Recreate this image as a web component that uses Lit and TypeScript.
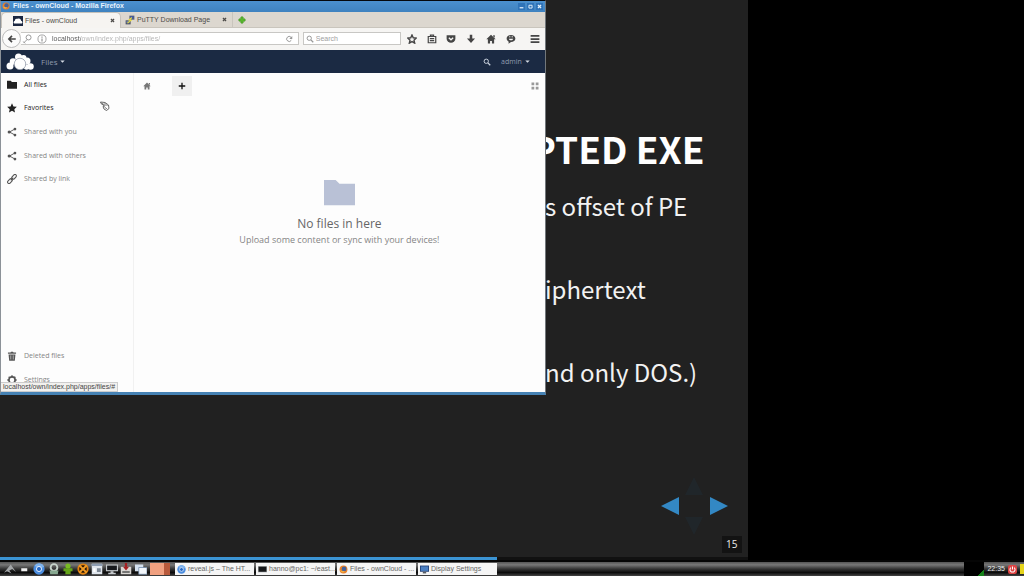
import { LitElement, html, svg, css, TemplateResult } from "lit";
import { customElement } from "lit/decorators.js";
import { classMap } from "lit/directives/class-map.js";
import { styleMap } from "lit/directives/style-map.js";

const shapes: Record<string, TemplateResult> = {
  back: svg`<path d="M14 8H3M8 3L3 8l5 5" fill="none" stroke="currentColor" stroke-width="2.6"/>`,
  key: svg`<g fill="none" stroke="currentColor" stroke-width="1.6"><circle cx="10.5" cy="5.5" r="4"/><path d="M8 9l-5.5 5.5M2 12l3 3"/></g>`,
  info: svg`<circle cx="8" cy="8" r="6.5" fill="none" stroke="currentColor" stroke-width="1.4"/><path d="M7 3.8h2v2H7zM7 7h2v5H7z" fill="currentColor"/>`,
  reload: svg`<path d="M12.6 10.5A5 5 0 1 1 12 4.5" fill="none" stroke="currentColor" stroke-width="2"/><path d="M14.5 2v6h-6z" fill="currentColor"/>`,
  search: svg`<circle cx="6.5" cy="6.5" r="4.3" fill="none" stroke="currentColor" stroke-width="2"/><path d="M9.8 9.8l4.7 4.7" stroke="currentColor" stroke-width="2.6"/>`,
  star: svg`<path d="M8 1.5l2 4.500 4.900.5-3.700 3.300 1.100 4.800L8 12.100l-4.300 2.500 1.100-4.800L1.100 6.500 6 6z" fill="none" stroke="currentColor" stroke-width="2.2"/>`,
  starFull: svg`<path d="M8 .5l2.300 5 5.400.6-4 3.700 1.100 5.400L8 12.500l-4.800 2.700 1.100-5.400-4-3.700 5.400-.6z" fill="currentColor"/>`,
  clipboard: svg`<path d="M2 4h12v10H2zM5.500 4V1.800h5V4M4.500 7.500h7M4.500 10.500h7" fill="none" stroke="currentColor" stroke-width="1.9"/>`,
  pocket: svg`<path d="M1 2h14v5a7 7 0 0 1-14 0z" fill="currentColor"/><path d="M4.500 6L8 9.300 11.500 6" fill="none" stroke="#f5f4f2" stroke-width="2"/>`,
  download: svg`<path d="M6 1h4v6h4.500L8 14.500 1.500 7H6z" fill="currentColor"/>`,
  home: svg`<path d="M8 1l7.500 7.500H13V15H9.500v-4h-3v4H3V8.500H.5z" fill="currentColor"/><path d="M11.500 2H14v4l-2.500-2z" fill="currentColor"/>`,
  chat: svg`<path d="M8 1.500c4 0 7 2.400 7 5.700s-3 5.700-7 5.700L4 15.500l.3-3.300C2.300 11.200 1 9.400 1 7.200c0-3.300 3-5.700 7-5.700z" fill="currentColor"/><path d="M4.500 7.500c1 3.500 6 3.500 7 0z" fill="#f5f4f2"/><path d="M5 4.500h2M9 4.500h2" stroke="#f5f4f2" stroke-width="1.5"/>`,
  menu: svg`<path d="M1 3h14M1 8h14M1 13h14" stroke="currentColor" stroke-width="2.8"/>`,
  folder: svg`<path d="M0 1h6l2 2h8v11H0z" fill="currentColor"/>`,
  share: svg`<path d="M13 3L4 8l9 5" fill="none" stroke="currentColor" stroke-width="1.5"/><circle cx="12.7" cy="3.2" r="2.200" fill="currentColor"/><circle cx="3.5" cy="8" r="2.5" fill="currentColor"/><circle cx="12.7" cy="12.8" r="2.2" fill="currentColor"/>`,
  link: svg`<g fill="none" stroke="currentColor" stroke-width="1.7"><rect x="6.8" y="2.300" width="9" height="4.6" rx="2.3" transform="rotate(-48 11.3 4.6)"/><rect x=".2" y="9.1" width="9" height="4.6" rx="2.3" transform="rotate(-48 4.7 11.4)"/><path d="M6 10l4-4"/></g>`,
  trash: svg`<path d="M1.500 2.500h4L6.500 1h3l1 1.500h4v2h-13zM2.500 5.500h11L12.500 15.500h-9z" fill="currentColor"/><path d="M6 7v6.500M10 7v6.500" stroke="#fff" stroke-width=".8"/>`,
  gear: svg`<circle cx="8" cy="8" r="5" fill="none" stroke="currentColor" stroke-width="2.6"/><path d="M8 .5v3M8 12.500v3M.5 8h3M12.500 8h3M2.700 2.700l2 2M11.300 11.300l2 2M2.700 13.300l2-2M11.300 4.700l2-2" stroke="currentColor" stroke-width="2.2"/>`,
  plus: svg`<path d="M8 1.500v13M1.500 8h13" stroke="currentColor" stroke-width="2.6"/>`,
  grid: svg`<path d="M1 1h5.500v5.500H1zM9.500 1H15v5.500H9.500zM1 9.500h5.500V15H1zM9.500 9.500H15V15H9.500z" fill="currentColor"/>`,
  close: svg`<path d="M3 3l10 10M13 3L3 13" stroke="currentColor" stroke-width="4"/>`,
  caret: svg`<path d="M1 4.500h14l-7 7.500z" fill="currentColor"/>`,
  newTab: svg`<path d="M8 1l2.500 1.500v3h3L15 8l-1.500 2.500h-3v3L8 15l-2.500-1.500v-3h-3L1 8l1.500-2.500h3v-3z" fill="#58b62c" stroke="#3f8f22"/>`,
  cloudTab: svg`<rect width="16" height="16" fill="#1b2740"/><path d="M2 12a2.500 2.500 0 0 1 1-4.500 3 3 0 0 1 4-3 4 4 0 0 1 6 3A2.500 2.500 0 0 1 14 12z" fill="#fff"/>`,
  putty: svg`<path d="M7 1h8v6.500H7z" fill="#5a6072"/><path d="M8.500 2.200h5v3.600h-5z" fill="#3a58b5"/><path d="M1 8.500h8V15H1z" fill="#4c5060"/><path d="M2.300 9.700h5v3.500h-5z" fill="#6b7ea8"/><path d="M11 4L6.500 8l3 .5L4 13" fill="none" stroke="#e8dc3c" stroke-width="1.8"/>`,
  firefox: svg`<circle cx="8" cy="8" r="7" fill="#e8812b"/><circle cx="9" cy="7" r="4.3" fill="#42629c"/><path d="M1 6c1 5 5 6 9 4-1 4-7 5-9-4z" fill="#f5c14b"/>`,
  chromium: svg`<circle cx="8" cy="8" r="7.500" fill="#4c8ee0"/><path d="M8 8L2 3.500A7.500 7.500 0 0 1 15 5z" fill="#7fb3ee"/><circle cx="8" cy="8" r="3.4" fill="#2466c4" stroke="#e8f1fb" stroke-width="1.3"/>`,
  bird: svg`<path d="M0 13L9 2l2 3 5 7-5-4-4 2 3 4-6-3z" fill="#a3a6a8"/>`,
  dash: svg`<path d="M3 7h8v4H3z" fill="#f0f0f0"/>`,
  recycle: svg`<circle cx="8" cy="6" r="4.5" fill="none" stroke="#c8d4cc" stroke-width="2.5"/><path d="M2 10h12l-1 5H3z" fill="#87a890"/>`,
  buddy: svg`<circle cx="8" cy="4" r="3.5" fill="#78ba23"/><path d="M2 7h12v4h-2.500v4h-7v-4H2z" fill="#65a51a"/>`,
  cross: svg`<circle cx="8" cy="8" r="7.5" fill="#e3820f"/><circle cx="8" cy="8" r="5" fill="#211308"/><path d="M3 3l10 10M13 3L3 13" stroke="#ef9b25" stroke-width="2.5"/>`,
  panel: svg`<path d="M1 1h14v14H1z" fill="#dfe5ec"/><path d="M1 1h14v3H1z" fill="#8d9db2"/><path d="M8 7h5v5H8z" fill="#7c8794"/><path d="M3 7h3v5H3z" fill="#fff"/>`,
  monitor: svg`<path d="M0 2h16v9H0z" fill="#c4c8cb"/><path d="M1.500 3.500h13v6h-13z" fill="#17191c"/><path d="M6 11h4v2h3v2H3v-2h3z" fill="#c4c8cb"/>`,
  tray: svg`<path d="M1 5h14v10H1z" fill="#d8d5d2"/><path d="M6.500 0h3v5h2.500L8 10 4 5h2.500z" fill="#a52022"/><path d="M3 11h10v2H3z" fill="#555"/>`,
  windows: svg`<path d="M0 2h11v9H0z" fill="#d5e1ef"/><path d="M5 6h11v9H5z" fill="#f3f7fb" stroke="#6b86a5"/>`,
  terminal: svg`<path d="M0 2h16v11H0z" fill="#a6a9aa"/><path d="M1 3h14v9H1z" fill="#151719"/>`,
  display: svg`<path d="M0 1h16v11H0z" fill="#213f75"/><path d="M1.500 2.500h13v8h-13z" fill="#4a7fc2"/><path d="M5 12h6v3H5z" fill="#595e65"/>`,
  power: svg`<rect width="16" height="16" rx="4" fill="#df4444"/><path d="M5 4.800a4.500 4.500 0 1 0 6 0M8 2.500V8" fill="none" stroke="#fff" stroke-width="1.8"/>`,
  minimize: svg`<path d="M2 10h12v4H2z" fill="currentColor"/>`,
  maximize: svg`<path d="M3 4h10v9H3z" fill="none" stroke="currentColor" stroke-width="3"/>`,
};

const icon = (name: string, size = "m") =>
  html`<svg class="icon ${size}" viewBox="0 0 16 16" aria-hidden="true">${shapes[name]}</svg>`;

@customElement("firefox-window")
class FirefoxWindow extends LitElement {
  static styles = css`
    :host { display: flex; flex-direction: column; box-sizing: border-box; overflow: hidden;
      background: #fdfdfd; border-top: 1px solid #05080c; border-bottom: 3px solid #4682b4;
      border-left: 1px solid #8c9298; border-right: 1px solid #72777b;
      font-family: "Liberation Sans", sans-serif; font-size: 7px; line-height: 10px; color: #555; }
    * { box-sizing: border-box; }
    button, input { font: inherit; color: inherit; border: 0; padding: 0; margin: 0; background: none; outline: 0; }
    button { display: flex; align-items: center; justify-content: center; }
    a { color: inherit; text-decoration: none; }
    .icon { display: block; flex: none; width: 10px; height: 10px; }
    .icon.xs { width: 5px; height: 5px; }
    .icon.s { width: 8px; height: 8px; }
    .icon.xl { width: 31px; height: 31px; }
    .title { display: flex; align-items: center; gap: 3px; height: 11px; padding: 0 2px 1px 1px; flex: none;
      background: linear-gradient(#4b90cf, #3f82bf); color: #e8f3fd; font-weight: 700; }
    .title h1 { font: inherit; margin: 0; flex: 1; }
    .controls { display: flex; gap: 2px; }
    .controls button { width: 7px; height: 7px; background: #2f73b8; color: #e4f1fc; }
    .tabs { display: flex; align-items: stretch; height: 16px; flex: none; background: #dcd7cf;
      border-bottom: 1px solid #c9c5bd; }
    .tab { display: flex; align-items: center; gap: 2px; width: 111px; padding: 0 5px 0 4px; color: #4d4b48; }
    .tab.active { width: 120px; margin-bottom: -1px; padding: 0 5px 0 11px; background: #f6f4f1;
      border-radius: 5px 5px 0 0; border: 1px solid #c5c1ba; border-bottom: 0; }
    .tab span { flex: 1; white-space: nowrap; }
    .add { width: 18px; border-left: 1px solid #c9c5bd; }
    .bar { display: flex; align-items: center; height: 22px; flex: none; padding: 0 5px 1px 1px; background: #f6f5f3; color: #454545; }
    .back { width: 19px; height: 19px; border: 1px solid #bbb; border-radius: 50%; background: #fbfbfb; flex: none; }
    .field { display: flex; align-items: center; gap: 5px; height: 13px; background: #fff;
      border: 1px solid #c8c7c4; padding: 0 5px; color: #999; }
    .address { flex: 1; border-left: 0; padding-left: 1px; }
    .find { width: 98px; margin-left: 4px; padding-left: 2px; gap: 2px; }
    .field input { flex: 1; min-width: 0; width: 0; height: 10px; }
    .address input { color: transparent; background: linear-gradient(90deg, #555 29px, #b2b2b2 29px); background-clip: text; -webkit-background-clip: text; }
    .find input::placeholder { color: #a0a0a0; opacity: 1; }
    .tools { display: flex; justify-content: space-between; width: 133px; margin-left: 6px; }
    .tools button:last-child { margin-left: 4px; }
    .cloud { display: flex; align-items: center; height: 23px; flex: none; padding: 0 15px 0 5px;
      background: #1b2a43; color: #8f9bad; font-family: "Open Sans", sans-serif; }
    .logo { width: 28px; height: 17px; margin-right: 7px; }
    .pick { gap: 3px; }
    .pick .icon { color: #d5dbe4; }
    .pick.app { font-size: 8px; margin-right: auto; }
    .glass { color: #c8d0dc; margin-right: 10px; }
    .body { display: flex; flex: 1; min-height: 0; font-family: "Open Sans", sans-serif; background: #fdfdfd; }
    nav { display: flex; flex-direction: column; width: 133px; border-right: 1px solid #f1f1f1; flex: none; }
    nav a { display: flex; align-items: center; gap: 7px; flex: 1; padding-left: 6px; color: #858585; }
    nav a .icon { color: #555; }
    nav a.strong, nav a.strong .icon { color: #222; }
    .views, .low { display: flex; flex-direction: column; height: 118px; }
    .low { height: 48px; margin-top: auto; }
    main { flex: 1; display: flex; flex-direction: column; }
    .crumbs { display: flex; align-items: center; height: 26px; padding: 0 6px 0 9px; color: #777; }
    .plus { width: 20px; height: 20px; margin-left: 21px; margin-right: auto; background: #f0f0f0; color: #111; }
    .crumbs button:last-child { color: #999; }
    .empty { display: flex; flex-direction: column; align-items: center; margin-top: 79px; color: #858585; font-size: 9px; }
    .empty .icon { color: #b9c1d6; }
    .empty h2 { margin: 7px 0 2px; font-size: 12px; line-height: 16px; font-weight: 400; color: #666; }
    .empty p { margin: 0; line-height: 12px; }
    .status { position: absolute; left: 0; bottom: 0; padding: 0 2px; line-height: 8px; height: 10px; background: #f2f1ef; border: 1px solid #ccc; border-left: 0; color: #444; }
    .pointer { position: absolute; left: 99px; top: 100px; width: 10px; height: 10px; }
  `;

  private nav(name: string, text: string, strong = false) {
    return html`<a href="#" class=${classMap({ strong })}>${icon(name)}<span>${text}</span></a>`;
  }

  render() {
    return html`
      <header class="title">${icon("firefox", "s")}<h1>Files - ownCloud - Mozilla Firefox</h1>
        <div class="controls">
          ${["minimize", "maximize", "close"].map((n) => html`<button aria-label=${n}>${icon(n, "xs")}</button>`)}
        </div>
      </header>
      <div class="tabs">
        <div class="tab active">${icon("cloudTab")}<span>Files - ownCloud</span><button aria-label="Close tab">${icon("close", "xs")}</button></div>
        <div class="tab">${icon("putty")}<span>PuTTY Download Page</span><button aria-label="Close tab">${icon("close", "xs")}</button></div>
        <button class="add" aria-label="New tab">${icon("newTab", "s")}</button>
      </div>
      <div class="bar">
        <button class="back" aria-label="Back">${icon("back")}</button>
        <label class="field address">${icon("key")}${icon("info")}
          <input aria-label="Address" value="localhost/own/index.php/apps/files/" />${icon("reload", "s")}
        </label>
        <label class="field find">${icon("search", "s")}<input aria-label="Search" placeholder="Search" /></label>
        <div class="tools">
          ${["star", "clipboard", "pocket", "download", "home", "chat", "menu"].map((n) => html`<button aria-label=${n}>${icon(n)}</button>`)}
        </div>
      </div>
      <div class="cloud">
        <svg class="logo" viewBox="0 0 56 34" role="img" aria-label="ownCloud">
          <g fill="#fff"><circle cx="8" cy="26" r="7"/><circle cx="14" cy="17" r="6.5"/><circle cx="25" cy="8" r="7"/><circle cx="35" cy="10" r="6"/><circle cx="42" cy="16" r="7"/><circle cx="49" cy="27" r="6.5"/><circle cx="41" cy="28" r="5.5"/></g>
          <circle cx="28" cy="22" r="11.500" fill="#fff" stroke="#8d96a6" stroke-width="1.5"/>
        </svg>
        <button class="pick app">Files ${icon("caret", "xs")}</button>
        <button class="glass" aria-label="Search files">${icon("search", "s")}</button>
        <button class="pick">admin ${icon("caret", "xs")}</button>
      </div>
      <div class="body">
        <nav>
          <div class="views">
            ${this.nav("folder", "All files", true)} ${this.nav("starFull", "Favorites", true)}
            ${this.nav("share", "Shared with you")} ${this.nav("share", "Shared with others")}
            ${this.nav("link", "Shared by link")}
          </div>
          <div class="low">${this.nav("trash", "Deleted files")} ${this.nav("gear", "Settings")}</div>
        </nav>
        <main>
          <div class="crumbs">
            <a href="#" aria-label="Home">${icon("home", "s")}</a>
            <button class="plus" aria-label="New">${icon("plus", "s")}</button>
            <button aria-label="Grid view">${icon("grid", "s")}</button>
          </div>
          <section class="empty">${icon("folder", "xl")}
            <h2>No files in here</h2>
            <p>Upload some content or sync with your devices!</p>
          </section>
        </main>
      </div>
      <div class="status">localhost/own/index.php/apps/files/#</div>
      <svg class="pointer" viewBox="0 0 20 20" aria-hidden="true"><path d="M1 2l9 1 7 5 1 7-5 4-5-3-2-5 3-1-7-5z" fill="#fff" stroke="#444" stroke-width="1.6"/><path d="M3 4l8 5M9 4l6 6M9 12l5 4" stroke="#555" stroke-width="1.6"/></svg>
    `;
  }
}

@customElement("app-root")
class AppRoot extends LitElement {
  static styles = css`
    :host { display: grid; grid-template-rows: 1fr 16px; height: 100vh; overflow: hidden; position: relative; background: #000; }
    * { box-sizing: border-box; }
    button { font: inherit; color: inherit; border: 0; padding: 0; margin: 0; background: none; }
    .icon { display: block; flex: none; width: 12px; height: 12px; }
    .icon.s { width: 9px; height: 9px; }
    .slide { width: 73%; background: #212121; color: #f2f2f2; display: flex; flex-direction: column;
      font-family: "Noto Sans CJK SC", sans-serif; font-size: 24px; line-height: 42px; min-height: 0; }
    .text { flex: 1; padding: 122px 43px 0 0; display: flex; flex-direction: column; }
    h2 { margin: 0 0 11px; font-size: 37px; line-height: 52px; font-weight: 700; color: #fff; text-align: right; }
    .text p { margin: 0 0 41px 545px; white-space: nowrap; }
    .foot { display: flex; flex-direction: column; align-items: flex-end; padding: 0 6px 4px 0; }
    .pad { display: grid; grid-template-columns: 18px 17px 18px; grid-template-rows: 20px 20px 20px; align-items: center; justify-items: center; column-gap: 7px; padding-right: 14px; }
    .pad button:nth-child(1), .pad button:nth-child(4) { grid-column: 2; }
    .pad button:nth-child(2) { grid-column: 1; }
    .pad button:nth-child(3) { grid-column: 3; }
    .arrow { display: block; width: 18px; height: 18px; fill: #3388c4; }
    .arrow.off { fill: #20262a; }
    .num { background: #131313; color: #eee; font: 10px/17px "Open Sans", sans-serif; padding: 0 4px; }
    .progress { height: 3px; background: #111; }
    .fill { height: 100%; background: #3b94d4; }
    firefox-window { position: absolute; left: 0; top: 0; width: 53.3%; height: 395px; }
    .task { display: flex; align-items: center; border-top: 2px solid #050505;
      background: linear-gradient(#555, #777 20%, #333 50%, #0c0c0c 75%, #444);
      font: 7px/12px "Liberation Sans", sans-serif; color: #666; }
    .launch { display: flex; align-items: center; justify-content: space-between; width: 148px; padding: 0 1px 0 4px; }
    .pager { width: 20px; height: 12px; margin: 0 5px 0 2px; background: linear-gradient(90deg, #f0a080 70%, #b85a3c 70%); }
    .app { display: flex; align-items: center; gap: 2px; width: 79px; height: 12px; padding: 0 2px; margin-right: 2px;
      background: #f5f5f5; white-space: nowrap; }
    .load { width: 20px; height: 14px; margin-left: auto; background: linear-gradient(135deg, #000 80%, #14821a 80%); }
    .clock { color: #eee; padding: 0 3px; }
    .edge { width: 4px; height: 10px; background: #e6d51c; margin-left: 3px; }
  `;

  private progress = 66.5;

  render() {
    const arrow = (label: string, d: string, off = false) =>
      html`<button aria-label=${label}><svg class=${classMap({ arrow: true, off })} viewBox="0 0 18 18"><path d=${d} /></svg></button>`;
    return html`
      <article class="slide">
        <div class="text">
          <h2>PTED EXE</h2>
          <p>s offset of PE</p>
          <p>iphertext</p>
          <p>nd only DOS.)</p>
        </div>
        <div class="foot">
          <div class="pad">
            ${arrow("Up", "M9 0l9 18H0z", true)} ${arrow("Previous", "M0 9L18 0v18z")}
            ${arrow("Next", "M18 9L0 0v18z")} ${arrow("Down", "M9 18L0 0h18z", true)}
          </div>
          <span class="num">15</span>
        </div>
        <div class="progress"><div class="fill" style=${styleMap({ width: this.progress + "%" })}></div></div>
      </article>
      <firefox-window></firefox-window>
      <footer class="task">
        <div class="launch">
          ${["bird", "dash", "chromium", "recycle", "buddy", "cross", "panel", "monitor", "tray", "windows"].map(
            (n) => html`<button aria-label=${n}>${icon(n)}</button>`
          )}
        </div>
        <div class="pager"></div>
        ${[
          ["chromium", "reveal.js – The HT..."],
          ["terminal", "hanno@pc1: ~/east..."],
          ["firefox", "Files - ownCloud - ..."],
          ["display", "Display Settings"],
        ].map(([n, t]) => html`<button class="app">${icon(n, "s")}<span>${t}</span></button>`)}
        <div class="load"></div>
        <span class="clock">22:35</span>
        ${icon("power", "s")}
        <div class="edge"></div>
      </footer>
    `;
  }
}
